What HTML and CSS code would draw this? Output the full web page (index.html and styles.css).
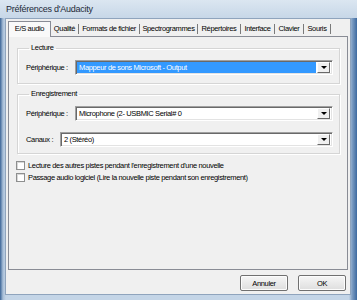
FILE: index.html
```html
<html lang="fr">
<head>
  <meta charset="UTF-8">
  <title>Préférences d'Audacity</title>
  <link rel="stylesheet" href="styles.css">
</head>
<body>

<div class="window">
  <div class="titlebar">Préférences d'Audacity</div>

  <div class="client">
    <div class="tabs">
      <div class="tab tab--active">E/S audio</div>
      <div class="tab tab--quality">Qualité</div>
      <div class="tab tab--formats">Formats de fichier</div>
      <div class="tab tab--spectro">Spectrogrammes</div>
      <div class="tab tab--dirs">Répertoires</div>
      <div class="tab tab--ui">Interface</div>
      <div class="tab tab--keys">Clavier</div>
      <div class="tab tab--mouse">Souris</div>
    </div>

    <div class="panel">
      <fieldset class="group group--play">
        <legend>Lecture</legend>
        <div class="row">
          <span class="label label--device">Périphérique :</span>
          <div class="combo">
            <span class="combo_text combo_text--selected">Mappeur de sons Microsoft - Output</span>
            <span class="combo_btn"></span>
          </div>
        </div>
      </fieldset>

      <fieldset class="group group--rec">
        <legend>Enregistrement</legend>
        <div class="row">
          <span class="label label--device">Périphérique :</span>
          <div class="combo">
            <span class="combo_text">Microphone (2- USBMIC Serial# 0</span>
            <span class="combo_btn"></span>
          </div>
        </div>
        <div class="row row--channels">
          <span class="label label--channels">Canaux :</span>
          <div class="combo">
            <span class="combo_text">2 (Stéréo)</span>
            <span class="combo_btn"></span>
          </div>
        </div>
      </fieldset>

      <label class="check"><span class="check_box"></span>Lecture des autres pistes pendant l'enregistrement d'une nouvelle</label>
      <label class="check"><span class="check_box"></span>Passage audio logiciel (Lire la nouvelle piste pendant son enregistrement)</label>
    </div>

    <div class="footer">
      <button class="btn">Annuler</button>
      <button class="btn">OK</button>
    </div>
  </div>
</div>

</body>
</html>
```

FILE: styles.css
```css
* {
  margin: 0;
  padding: 0;
  box-sizing: border-box;
}

body {
  width: 357px;
  height: 300px;
  overflow: hidden;
  background: #9fb6cf;
  font-family: 'Liberation Sans', Arial, sans-serif;
  font-size: 7.5px;
  letter-spacing: -0.35px;
  color: #000;
}

.window {
  display: flex;
  flex-direction: column;
  height: 300px;
  background: linear-gradient(90deg, #3a6496 0px, #a9bfd8 3px, #c4d5e7 6px, #c4d5e7 349px, #7f9fc4 352px, #3d6aa0 357px);
}

.titlebar {
  height: 18px;
  padding: 3px 0 0 6px;
  font-size: 9px;
  letter-spacing: -0.25px;
  line-height: 12px;
  color: #1e2a38;
  background: linear-gradient(#dbe6f1, #c7d7e8);
}

.client {
  flex: 1;
  display: flex;
  flex-direction: column;
  margin: 0 6px 5px 5px;
  padding: 2px 2px 0 2px;
  background: #f0f0f0;
  border: 1px solid #8fa4bd;
}

/* tabs */
.tabs {
  display: flex;
  align-items: flex-end;
  height: 15px;
  white-space: nowrap;
}

.tab {
  flex-shrink: 0;
  height: 12px;
  line-height: 12px;
  text-align: center;
}

.tab:not(.tab--active) {
  height: 10px;
  line-height: 9px;
  margin-bottom: 2px;
  border-right: 1px solid #7a7a7a;
}

.tab--quality { width: 28px; }
.tab--formats { width: 61px; }
.tab--spectro { width: 58px; }
.tab--dirs { width: 43px; }
.tab--ui { width: 34px; }
.tab--keys { width: 29px; }
.tab--mouse { width: 27px; }

.tab--active {
  width: 43px;
  height: 16px;
  line-height: 13px;
  border: 1px solid #898c95;
  border-bottom: none;
  background: #f9f9f9;
  position: relative;
  top: 1px;
}

.panel {
  height: 234px;
  padding: 0 7px 0 8px;
  border: 1px solid #898c95;
  background: #f0f0f0;
}

/* group boxes */
.group {
  margin-top: 6px;
  padding: 7px 6px 8px 8px;
  border: 1px solid #d5d5d5;
  box-shadow: inset 1px 1px 0 #fff, 1px 1px 0 #fff;
}

.group legend {
  margin-left: 3px;
  padding: 0 2px;
  height: 10px;
  line-height: 10px;
}

.group--rec {
  margin-top: 5px;
  padding-bottom: 6px;
}

.row {
  display: flex;
  align-items: center;
  height: 15px;
}

.row--channels { margin-top: 11px; }

.label { white-space: nowrap; }
.label--device { width: 49px; }
.label--channels { width: 34px; }

.combo {
  flex: 1;
  display: flex;
  height: 15px;
  padding: 1px 2px 1px 1px;
  background: #fff;
  border: 1px solid #a0a0a0;
  border-right-color: #fff;
  border-bottom-color: #fff;
  box-shadow: inset 1px 1px 0 #696969, inset -1px -1px 0 #e3e3e3;
}

.combo_text {
  flex: 1;
  padding-left: 2px;
  line-height: 11px;
  white-space: nowrap;
}

.combo_text--selected {
  background: #3399ff;
  color: #fff;
}

.combo_btn {
  width: 13px;
  margin-left: 1px;
  background: #f0f0f0;
  border: 1px solid #fff;
  border-right-color: #696969;
  border-bottom-color: #696969;
  display: flex;
  align-items: center;
  justify-content: center;
}

.combo_btn::after {
  content: "";
  border-left: 3px solid transparent;
  border-right: 3px solid transparent;
  border-top: 3px solid #000;
}

/* checkboxes */
.check {
  display: flex;
  align-items: center;
  height: 12px;
  white-space: nowrap;
}

.check:first-of-type { margin-top: 5px; }

.check_box {
  width: 9px;
  height: 9px;
  margin: 0 3px 0 -1px;
  background: #fff;
  border: 1px solid #8e8f8f;
  box-shadow: inset 1px 1px 0 #d8d8d8;
}

/* footer buttons */
.footer {
  display: flex;
  justify-content: flex-end;
  gap: 10px;
  padding: 5px 2px 0 0;
}

.btn {
  width: 48px;
  height: 16px;
  font-family: inherit;
  font-size: 7.5px;
  letter-spacing: -0.35px;
  color: #000;
  background: linear-gradient(#f6f6f6, #dedede);
  border: 1px solid #707070;
  border-radius: 2px;
  box-shadow: inset 0 0 0 1px #fcfcfc;
}
```
